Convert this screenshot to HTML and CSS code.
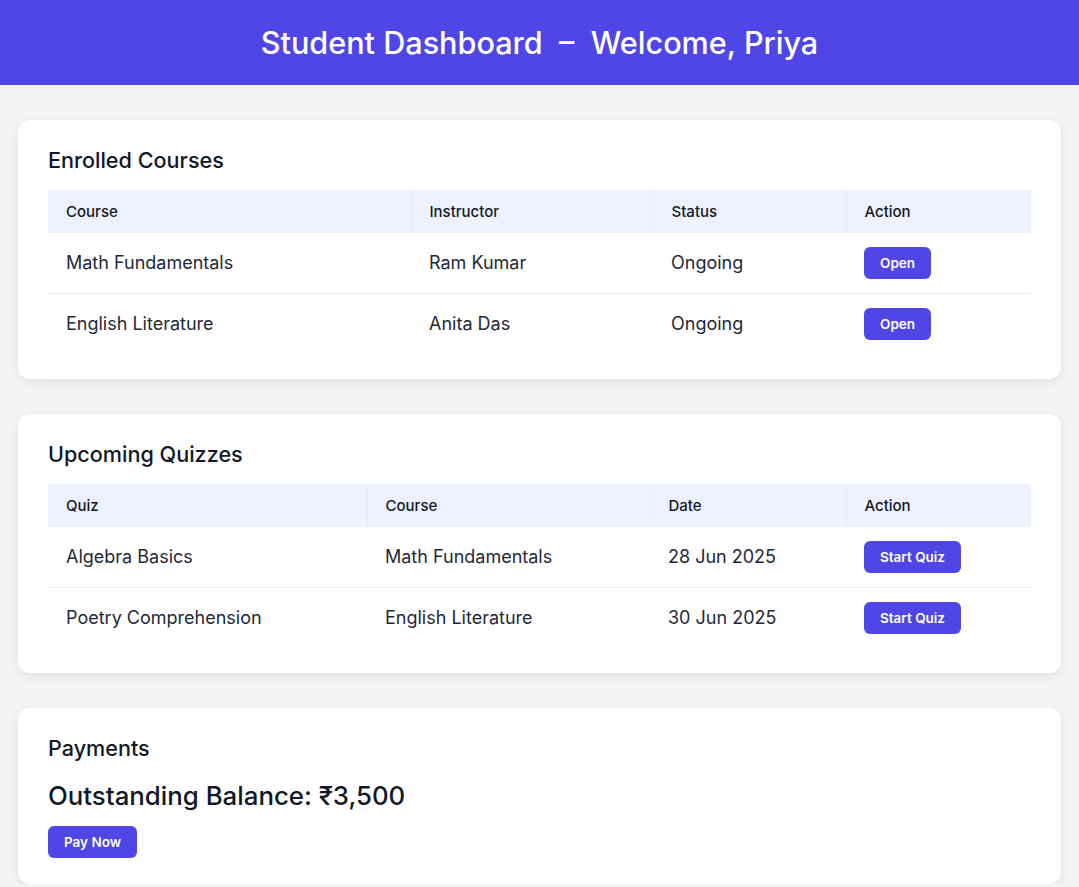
FILE: index.html
```html
<!DOCTYPE html>
<html lang="en">
<head>
<meta charset="utf-8">
<title>Student Dashboard</title>
<link rel="stylesheet" href="styles.css">
</head>
<body>
<header class="topbar">
  <h1 class="topbar-title">Student Dashboard&nbsp; – &nbsp;Welcome, Priya</h1>
</header>
<main class="content">
  <section class="card">
    <h2 class="card-title">Enrolled Courses</h2>
    <table class="data-table">
      <colgroup>
        <col class="c-363"><col class="c-242"><col class="c-193"><col class="c-185">
      </colgroup>
      <thead>
        <tr><th>Course</th><th>Instructor</th><th>Status</th><th>Action</th></tr>
      </thead>
      <tbody>
        <tr><td>Math Fundamentals</td><td>Ram Kumar</td><td>Ongoing</td><td><button class="btn">Open</button></td></tr>
        <tr><td>English Literature</td><td>Anita Das</td><td>Ongoing</td><td><button class="btn">Open</button></td></tr>
      </tbody>
    </table>
  </section>

  <section class="card">
    <h2 class="card-title">Upcoming Quizzes</h2>
    <table class="data-table">
      <colgroup>
        <col class="c-319"><col class="c-283"><col class="c-196"><col class="c-185">
      </colgroup>
      <thead>
        <tr><th>Quiz</th><th>Course</th><th>Date</th><th>Action</th></tr>
      </thead>
      <tbody>
        <tr><td>Algebra Basics</td><td>Math Fundamentals</td><td>28 Jun 2025</td><td><button class="btn">Start Quiz</button></td></tr>
        <tr><td>Poetry Comprehension</td><td>English Literature</td><td>30 Jun 2025</td><td><button class="btn">Start Quiz</button></td></tr>
      </tbody>
    </table>
  </section>

  <section class="card">
    <h2 class="card-title">Payments</h2>
    <p class="balance">Outstanding Balance: ₹3,500</p>
    <button class="btn">Pay Now</button>
  </section>
</main>
</body>
</html>
```

FILE: styles.css
```css
* { box-sizing: border-box; }

body {
  margin: 0;
  background: #f3f4f6;
  font-family: Inter, "Noto Sans", sans-serif;
  color: #111827;
}

.topbar {
  background: #4f46e5;
  height: 85px;
  display: flex;
  align-items: center;
  justify-content: center;
}

.topbar-title {
  margin: 0;
  color: #ffffff;
  font-size: 30.6px;
  font-weight: 500;
  line-height: 38px;
}

.content {
  padding: 35px 18px 0;
  display: flex;
  flex-direction: column;
  gap: 35px;
}

.card {
  background: #ffffff;
  border-radius: 12px;
  box-shadow: 0 3px 12px rgba(0, 0, 0, 0.08);
  padding: 27px 30px 26px;
}

.card-title {
  margin: 0 0 16px;
  font-size: 21.6px;
  font-weight: 500;
  line-height: 27px;
  color: #111827;
}

.data-table {
  width: 100%;
  table-layout: fixed;
  border-collapse: collapse;
}

.c-363 { width: 363px; }
.c-242 { width: 242px; }
.c-193 { width: 193px; }
.c-185 { width: 185px; }
.c-319 { width: 319px; }
.c-283 { width: 283px; }
.c-196 { width: 196px; }

.data-table th {
  background: #eef2ff;
  text-align: left;
  font-weight: 500;
  font-size: 15px;
  line-height: 19px;
  padding: 12px 18px 12px;
  color: #111827;
  border-left: 1px solid #e8ebf7;
}

.data-table th:first-child { border-left: none; }

.data-table td {
  font-size: 18px;
  font-weight: 400;
  color: #1f2937;
  padding: 14px 18px 13px;
  border-bottom: 1px solid #ebebed;
  line-height: 32px;
  height: 60px;
}

.data-table tbody tr:last-child td { border-bottom: none; }

.btn {
  display: inline-block;
  background: #4f46e5;
  color: #ffffff;
  border: none;
  border-radius: 6px;
  padding: 0 16px;
  height: 32px;
  font-family: Inter, "Noto Sans", sans-serif;
  font-size: 13.5px;
  font-weight: 600;
  line-height: 32px;
  cursor: pointer;
  vertical-align: top;
}

.balance {
  margin: 18px 0 15px;
  font-size: 25.8px;
  font-weight: 500;
  line-height: 31px;
  color: #111827;
}
```
